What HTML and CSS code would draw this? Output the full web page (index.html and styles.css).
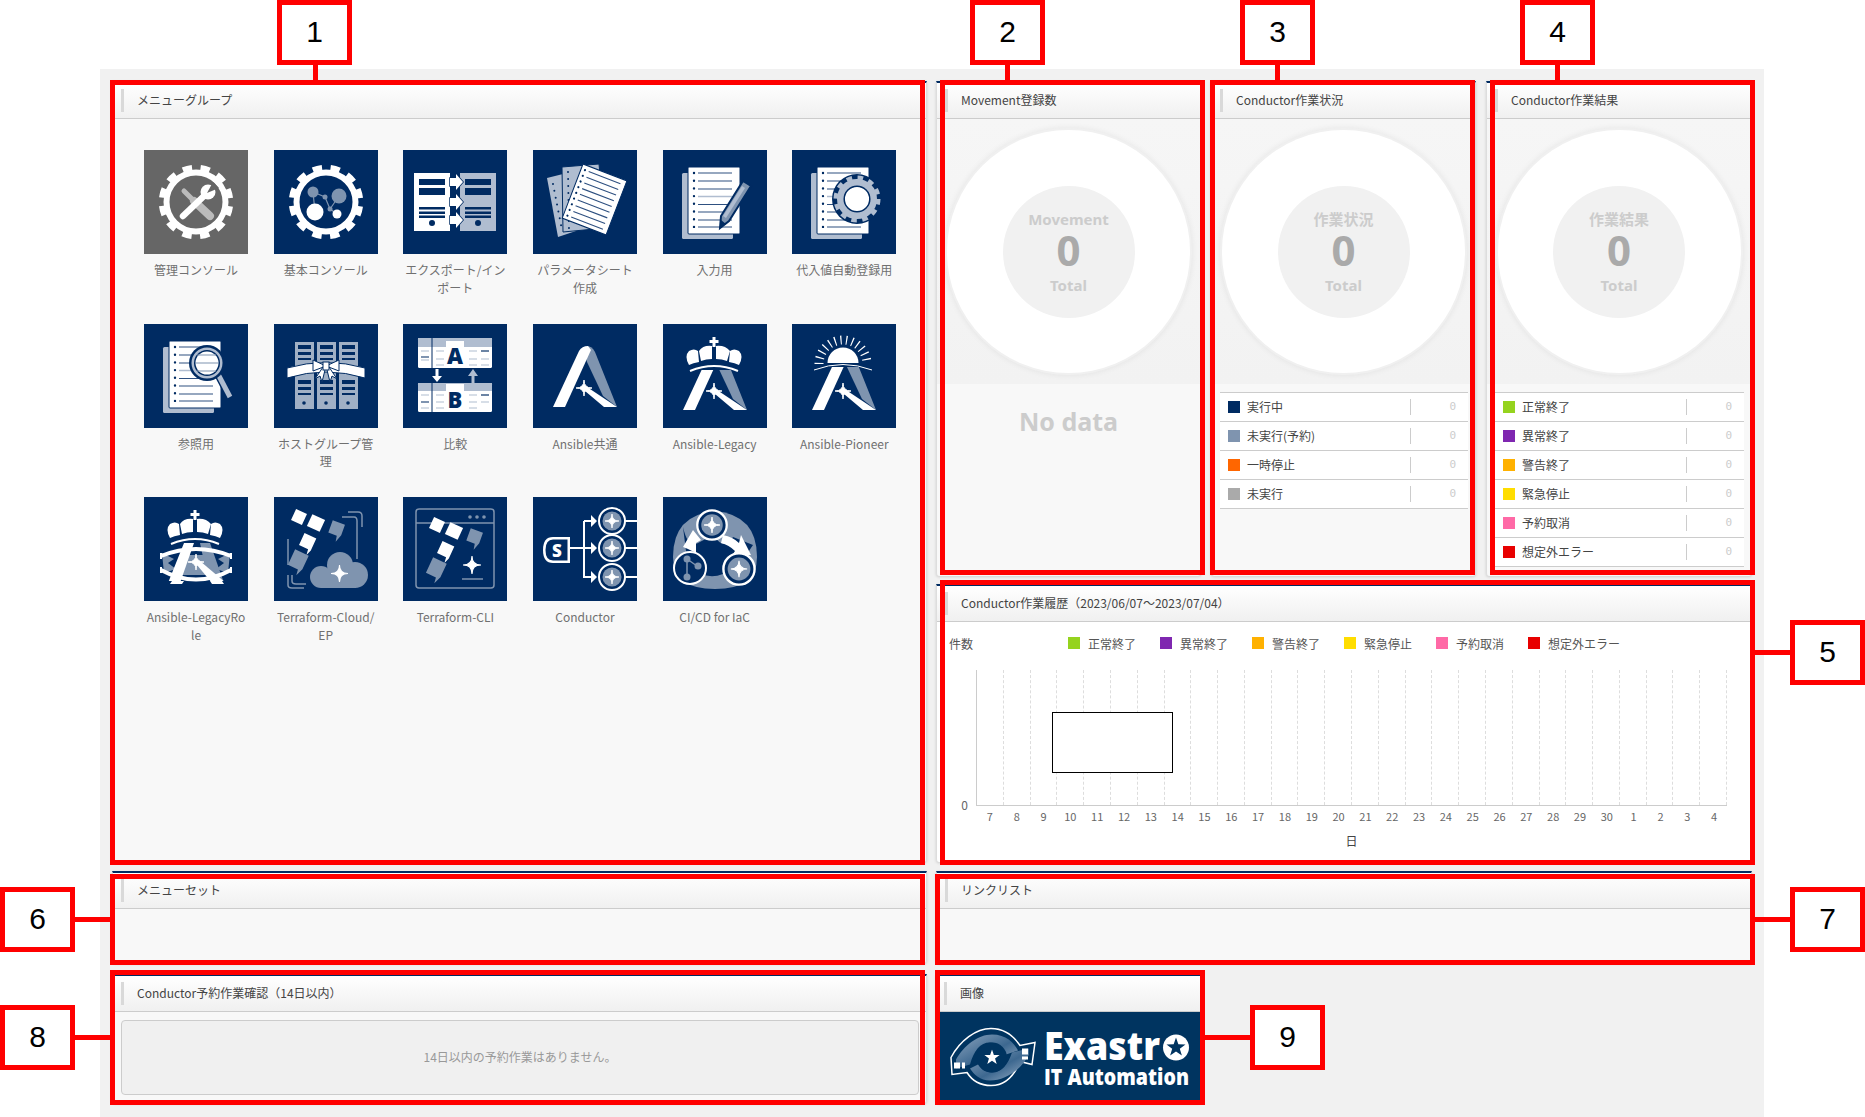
FILE: index.html
```html
<!DOCTYPE html>
<html lang="ja">
<head>
<meta charset="utf-8">
<title>Exastro IT Automation Dashboard</title>
<link rel="stylesheet" href="styles.css">
</head>
<body>
<svg class="sprite" aria-hidden="true">
  <defs>
    <symbol id="star4" viewBox="0 0 20 20"><path d="M10,0 Q10,10 20,10 Q10,10 10,20 Q10,10 0,10 Q10,10 10,0Z" fill="#fff" stroke="#fff" stroke-width="1.2"/></symbol>
    <symbol id="star5" viewBox="-10 -10 20 20"><polygon points="0,-10 2.35,-3.24 9.51,-3.09 3.8,1.24 5.88,8.09 0,4 -5.88,8.09 -3.8,1.24 -9.51,-3.09 -2.35,-3.24"/></symbol>
    <symbol id="gear" viewBox="0 0 104 104">
      <circle cx="52" cy="52" r="29.5" fill="none" stroke="#fff" stroke-width="6"/>
      <circle cx="52" cy="52" r="34" fill="none" stroke="#fff" stroke-width="6.5" stroke-dasharray="9.3 8.5" stroke-dashoffset="-4.3"/>
    </symbol>
    <symbol id="doc" viewBox="0 0 104 104">
      <rect x="19" y="23" width="51" height="66" rx="1.5" fill="#b0bdd0"/>
      <rect x="25" y="17" width="52" height="67" rx="1" fill="#fff" stroke="#002b62" stroke-width="1"/>
      <line x1="31" y1="23" x2="31" y2="77" stroke="#002b62" stroke-width="2.4" stroke-linecap="round" stroke-dasharray="0 7.7"/>
      <path d="M35,23H69M35,31H69M35,39H69M35,54.500H69M35,62H69M35,70H69M35,77H69" stroke="#2e5080" stroke-width="1.1"/>
      <path d="M35,46.500H69" stroke="#b0bdd0" stroke-width="1.5"/>
    </symbol>
    <symbol id="ansible" viewBox="0 0 104 104">
      <path d="M54,22 Q59,22 62,28 L84,83 L70,72 L54,38 L52,30Z" fill="#7f94af"/>
      <path d="M20,83 L46,27 Q49,22 55,22 L58,26 L32,83Z" fill="#fff"/>
      <path d="M54,63 L84,83 L71,83 L52,67Z" fill="#fff"/>
      <use href="#star4" x="43" y="56" width="16" height="16"/>
    </symbol>
    <symbol id="crown" viewBox="0 0 104 104">
      <path d="M49.500,13H52.500V16H55.500V19H52.500V23H49.500V19H46.500V16H49.500Z" fill="#fff"/>
      <path d="M26,41 Q21,32 26,27 Q31,24 35,27 L36,38 Q30,39 26,41Z" fill="#fff"/>
      <path d="M38,37 L36,27 Q40,21 49,22 L49,35 Q43,35 38,37Z" fill="#fff"/>
      <path d="M53,35 L53,22 Q62,21 67,27 L64,37 Q59,35 53,35Z" fill="#fff"/>
      <path d="M76,41 Q81,32 76,27 Q71,24 67,27 L66,38 Q72,39 76,41Z" fill="#fff"/>
      <path d="M27,47 Q51,37 75,47" fill="none" stroke="#fff" stroke-width="2"/>
    </symbol>
    <symbol id="tf" viewBox="0 0 104 104">
      <rect x="-6" y="-6" width="12" height="12" fill="#fff" transform="translate(25 20) rotate(25)"/>
      <rect x="-7" y="-6.500" width="14" height="13" fill="#fff" transform="translate(42 26) rotate(25)"/>
      <path d="M-6,-7 H7 V4 L4,12 L3,6 H-6Z" fill="#7f94af" transform="translate(62 32) rotate(20)"/>
      <path d="M-6,-7 H7 V6 L5,12 L4,6 H-6Z" fill="#fff" transform="translate(33 45) rotate(25)"/>
      <path d="M-8,-8 H7 V7 L4,15 L3,9 H-8Z" fill="#7f94af" transform="translate(25 63) rotate(25)"/>
    </symbol>
    <symbol id="rings" viewBox="0 0 30 30">
      <circle cx="15" cy="15" r="13" fill="#002b62" stroke="#fff" stroke-width="2"/>
      <circle cx="15" cy="15" r="9.500" fill="#7f94af"/>
      <use href="#star4" x="8" y="8" width="14" height="14"/>
    </symbol>
  </defs>
</svg>

<main class="dashboard">
  <div class="col-left">
    <section class="panel panel-top">
      <h2 class="panel-title">メニューグループ</h2>
      <div class="menu-grid">
        <a class="menu-item">
          <svg class="tile tile-gray" viewBox="0 0 104 104"><use href="#gear" width="104" height="104"/>
            <path d="M40,41 L50,51" stroke="#bbb" stroke-width="5" stroke-linecap="round"/><path d="M50,51 L66,66" stroke="#bbb" stroke-width="8" stroke-linecap="round"/>
            <path d="M39,66 L60,46" stroke="#fff" stroke-width="6.500" stroke-linecap="round"/><circle cx="64" cy="42" r="7.500" fill="#fff"/><path d="M63,43 L69,32 L75,38Z" fill="#666"/>
          </svg>
          <span class="menu-label">管理コンソール</span>
        </a>
        <a class="menu-item">
          <svg class="tile" viewBox="0 0 104 104"><use href="#gear" width="104" height="104"/>
            <path d="M39,42 L41,62 M39,42 L51,47 L56,59 L65,46 M56,59 L63,64" stroke="#7f94af" stroke-width="1.2" fill="none"/>
            <circle cx="39" cy="42" r="5.500" fill="#7f94af"/><circle cx="65" cy="46" r="7.500" fill="#7f94af"/><circle cx="51" cy="47" r="2.500" fill="#7f94af"/><circle cx="56" cy="59" r="2.500" fill="#7f94af"/>
            <circle cx="41" cy="62" r="8.500" fill="#fff"/><circle cx="63" cy="64" r="4.500" fill="#fff"/>
          </svg>
          <span class="menu-label">基本コンソール</span>
        </a>
        <a class="menu-item">
          <svg class="tile" viewBox="0 0 104 104">
            <rect x="57" y="23" width="36" height="58" fill="#b0bdd0"/><rect x="11" y="23" width="36" height="58" fill="#fff"/>
            <path d="M16,29H42V35H16ZM16,38H42V45H16ZM16,57H42V59.500H16ZM16,61.500H42V64H16ZM16,65.500H42V68H16ZM62,29H88V35H62ZM62,38H88V45H62ZM62,57H88V59.500H62ZM62,61.500H88V64H62ZM62,65.500H88V68H62Z" fill="#002b62"/>
            <circle cx="29" cy="73" r="3" fill="#002b62"/><circle cx="75" cy="73" r="3" fill="#002b62"/>
            <path d="M47,28H53V24L60,32L53,40V36H47ZM47,48H53V44L60,52L53,60V56H47ZM47,66H53V62L60,70L53,78V74H47Z" fill="#fff" stroke="#002b62" stroke-width="1.500" paint-order="stroke"/>
          </svg>
          <span class="menu-label">エクスポート/イン<br>ポート</span>
        </a>
        <a class="menu-item">
          <svg class="tile" viewBox="0 0 104 104">
            <polygon points="14,28 38,22 52,78 25,87" fill="#b0bdd0"/><polygon points="29,17 66,14 72,78 30,82" fill="#b0bdd0" stroke="#002b62" stroke-width="1"/>
            <line x1="20" y1="34" x2="29" y2="80" stroke="#002b62" stroke-width="2" stroke-dasharray="0 7" stroke-linecap="round"/><line x1="35" y1="22" x2="36" y2="80" stroke="#002b62" stroke-width="2" stroke-dasharray="0 7" stroke-linecap="round"/>
            <g transform="translate(50 14) rotate(21)">
              <rect width="47" height="58" fill="#fff" stroke="#002b62" stroke-width="1"/>
              <line x1="4" y1="5" x2="4" y2="54" stroke="#002b62" stroke-width="2.200" stroke-linecap="round" stroke-dasharray="0 6.100"/>
              <path d="M8,5H42M8,11.100H42M8,17.200H42M8,23.300H42M8,29.400H42M8,35.500H42M8,41.600H42M8,47.700H42M8,53.800H42" stroke="#2e5080" stroke-width="1.100"/>
            </g>
          </svg>
          <span class="menu-label">パラメータシート<br>作成</span>
        </a>
        <a class="menu-item">
          <svg class="tile" viewBox="0 0 104 104"><use href="#doc" width="104" height="104"/>
            <path d="M57,78 L58,66 L80,31 L88,36 L66,71Z" fill="#7f94af" stroke="#002b62" stroke-width="2"/>
            <path d="M60,66 L79,36 L82,38 L63,68Z" fill="#b0bdd0"/><path d="M57,78 L58,70 L63,74Z" fill="#002b62"/>
          </svg>
          <span class="menu-label">入力用</span>
        </a>
        <a class="menu-item">
          <svg class="tile" viewBox="0 0 104 104"><use href="#doc" width="104" height="104"/>
            <circle cx="65" cy="49" r="25" fill="#002b62"/>
            <circle cx="65" cy="49" r="21" fill="none" stroke="#b0bdd0" stroke-width="5" stroke-dasharray="5.500 5.490"/>
            <circle cx="65" cy="49" r="16.500" fill="none" stroke="#b0bdd0" stroke-width="7"/>
            <circle cx="65" cy="49" r="12.800" fill="#fff" stroke="#002b62" stroke-width="1.500"/>
          </svg>
          <span class="menu-label">代入値自動登録用</span>
        </a>

        <a class="menu-item">
          <svg class="tile" viewBox="0 0 104 104"><use href="#doc" width="104" height="104"/>
            <path d="M75,52 L86,73" stroke="#002b62" stroke-width="8"/><path d="M75,52 L86,73" stroke="#b0bdd0" stroke-width="5"/>
            <circle cx="63" cy="39" r="18" fill="#002b62"/><circle cx="63" cy="39" r="15.500" fill="#b0bdd0"/><circle cx="63" cy="39" r="13" fill="#002b62"/><circle cx="63" cy="39" r="11.500" fill="#fff"/>
            <path d="M53,31H72M52,39H74M53,47H72" stroke="#7f94af" stroke-width="1.200"/>
          </svg>
          <span class="menu-label">参照用</span>
        </a>
        <a class="menu-item">
          <svg class="tile" viewBox="0 0 104 104">
            <path d="M21,18H40V85H21ZM43,18H62V85H43ZM65,18H84V85H65Z" fill="#a0b0c5"/>
            <path d="M24,21H37V25H24ZM24,28H37V31H24ZM24,34H37V36H24ZM46,21H59V25H46ZM46,28H59V31H46ZM46,34H59V36H46ZM68,21H81V25H68ZM68,28H81V31H68ZM68,34H81V36H68ZM24,56H37V60H24ZM24,63H37V66H24ZM24,69H37V71H24ZM46,56H59V60H46ZM46,63H59V66H46ZM46,69H59V71H46ZM68,56H81V60H68ZM68,63H81V66H68ZM68,69H81V71H68Z" fill="#002b62"/>
            <circle cx="30" cy="79" r="1.800" fill="#002b62"/><circle cx="52" cy="79" r="1.800" fill="#002b62"/><circle cx="74" cy="79" r="1.800" fill="#002b62"/>
            <path d="M13,44 Q52,33 91,44 L91,54 Q52,42 13,54Z" fill="#fff" stroke="#002b62" stroke-width="1"/>
            <path d="M52,42 L39,36 L39,47Z M52,42 L65,36 L65,47Z M49,43 L41,55 L46,52 L48,58 L51,46Z M55,43 L63,55 L58,52 L56,58 L53,46Z" fill="#fff" stroke="#002b62" stroke-width="1"/>
            <rect x="49" y="38" width="6" height="8" fill="#fff" stroke="#002b62" stroke-width="1"/>
          </svg>
          <span class="menu-label">ホストグループ管<br>理</span>
        </a>
        <a class="menu-item">
          <svg class="tile" viewBox="0 0 104 104">
            <rect x="15" y="14" width="74" height="30" rx="1.500" fill="#fff"/><path d="M15,14H89V23H15Z" fill="#b0bdd0"/>
            <rect x="15" y="59" width="74" height="29" rx="1.500" fill="#fff"/><path d="M15,59H89V67H15Z" fill="#b0bdd0"/>
            <path d="M29,14V44M29,59V88" stroke="#002b62" stroke-width="1"/>
            <path d="M18,27H26M18,36H26M66,27H74M78,27H86M66,35H74M78,35H86M66,41H74M78,41H86M33,27H41M33,35H41M33,41H41M18,71H26M33,71H41M33,78H41M33,84H41M66,71H74M78,71H86M66,78H74M78,78H86M66,84H74M18,84H26" stroke="#b0bdd0" stroke-width="1.200"/>
            <path d="M18,33H26M18,78H26M78,71H86M78,27H86" stroke="#002b62" stroke-width="1.200"/>
            <rect x="43" y="17" width="18" height="8" fill="#fff"/><rect x="43" y="60" width="18" height="8" fill="#fff"/>
            <text class="tile-letter" x="52" y="40" text-anchor="middle">A</text><text class="tile-letter" x="52" y="84" text-anchor="middle">B</text>
            <path d="M32.500,45H35.500V52H39L34,58L29,52H32.500Z" fill="#fff"/><path d="M68.500,59V52H65L70,45L75,52H71.500V59Z" fill="#b0bdd0"/>
          </svg>
          <span class="menu-label">比較</span>
        </a>
        <a class="menu-item">
          <svg class="tile" viewBox="0 0 104 104"><use href="#ansible" width="104" height="104"/></svg>
          <span class="menu-label">Ansible共通</span>
        </a>
        <a class="menu-item">
          <svg class="tile" viewBox="0 0 104 104"><use href="#ansible" y="3" width="104" height="104"/><rect width="104" height="46" fill="#002b62"/><use href="#crown" width="104" height="104"/></svg>
          <span class="menu-label">Ansible-Legacy</span>
        </a>
        <a class="menu-item">
          <svg class="tile" viewBox="0 0 104 104"><use href="#ansible" y="3" width="104" height="104"/><rect width="104" height="43" fill="#002b62"/>
            <path d="M35.500,39 A15.500,15.500 0 0 1 66.500,39Z" fill="#fff"/>
            <path d="M27,40 A24,24 0 0 1 75,40" fill="none" stroke="#fff" stroke-width="9" stroke-dasharray="1.200 4.600"/>
            <path d="M22,46 Q51,35 80,46" fill="none" stroke="#fff" stroke-width="1"/>
          </svg>
          <span class="menu-label">Ansible-Pioneer</span>
        </a>

        <a class="menu-item">
          <svg class="tile" viewBox="0 0 104 104">
            <path d="M18,56 L30,62 L24,66 L32,72 L20,76Z M86,56 L74,62 L80,66 L72,72 L84,76Z M36,58 H68 L72,78 H34Z" fill="#7f94af"/>
            <path d="M24,86 L40,46 H50 L36,86Z" fill="#fff"/><path d="M56,46 H66 L80,86 L62,74Z" fill="#7f94af"/>
            <path d="M56,64 L82,86 H68 L53,68Z" fill="#fff"/><use href="#star4" x="44" y="57" width="16" height="16"/>
            <rect y="84" width="104" height="20" fill="#002b62"/>
            <path d="M28,84H40L38,87H26ZM66,84H78L80,87H68Z" fill="#fff"/>
            <use href="#crown" y="0" width="104" height="104"/>
            <path d="M17,59 Q52,45 87,59" fill="none" stroke="#fff" stroke-width="4"/>
            <path d="M17,73 Q52,92 87,73" fill="none" stroke="#fff" stroke-width="4"/>
            <path d="M17,56V62M87,56V62M17,70V76M87,70V76" stroke="#fff" stroke-width="2"/>
          </svg>
          <span class="menu-label">Ansible-LegacyRo<br>le</span>
        </a>
        <a class="menu-item">
          <svg class="tile" viewBox="0 0 104 104"><use href="#tf" width="104" height="104"/>
            <path d="M74,15H84Q88,15 88,19V30M68,20H80Q83,20 83,24V62M14,42V68M14,78V88Q14,91 18,91H30M18,78V84Q18,87 22,87H32" fill="none" stroke="#7f94af" stroke-width="1.500"/>
            <circle cx="66" cy="68" r="13" fill="#7f94af"/><circle cx="47" cy="80" r="11" fill="#7f94af"/><circle cx="81" cy="78" r="13" fill="#7f94af"/><rect x="47" y="76" width="35" height="15" fill="#7f94af"/>
            <use href="#star4" x="57" y="68" width="17" height="17"/>
          </svg>
          <span class="menu-label">Terraform-Cloud/<br>EP</span>
        </a>
        <a class="menu-item">
          <svg class="tile" viewBox="0 0 104 104">
            <rect x="13" y="12" width="78" height="79" rx="3" fill="none" stroke="#7f94af" stroke-width="1.500"/>
            <path d="M13,26H91" stroke="#7f94af" stroke-width="1.500"/>
            <circle cx="67" cy="20" r="1.800" fill="#7f94af"/><circle cx="74" cy="20" r="1.800" fill="#7f94af"/><circle cx="81" cy="20" r="1.800" fill="#7f94af"/>
            <use href="#tf" x="9" y="8" width="104" height="104"/>
            <use href="#star4" x="60" y="59" width="18" height="18"/>
            <path d="M59,82H80" stroke="#7f94af" stroke-width="1.500"/>
          </svg>
          <span class="menu-label">Terraform-CLI</span>
        </a>
        <a class="menu-item">
          <svg class="tile" viewBox="0 0 104 104">
            <path d="M37,40H20Q10,40 10,53Q10,66 20,66H37Z" fill="#fff"/><path d="M34.500,42.500H20Q12.500,42.500 12.500,53Q12.500,63.500 20,63.500H34.500Z" fill="#002b62"/>
            <text class="tile-letter tile-s" x="24" y="59.500" text-anchor="middle">S</text>
            <path d="M37,51H59M51,24H59M51,80H59M51,24V81" stroke="#fff" stroke-width="2" fill="none"/>
            <path d="M58,18L64,24L58,30ZM58,45L64,51L58,57ZM58,74L64,80L58,86Z" fill="#fff"/>
            <path d="M91,24H104M91,51H104M91,80H104" stroke="#fff" stroke-width="2"/>
            <use href="#rings" x="64" y="9" width="30" height="30"/><use href="#rings" x="64" y="36" width="30" height="30"/><use href="#rings" x="64" y="65" width="30" height="30"/>
          </svg>
          <span class="menu-label">Conductor</span>
        </a>
        <a class="menu-item">
          <svg class="tile" viewBox="0 0 104 104">
            <path d="M10,60 Q10,18 52,14 Q94,18 94,60 Q94,92 52,92 Q10,92 10,60Z" fill="#7f94af"/>
            <path d="M20,30 Q25,52 35,46 L50,38 Q62,55 70,40 L90,48 Q60,96 25,70Z" fill="#002b62"/>
            <path d="M20,50 L30,33 L38,43 L33,46 L33,56 L25,52Z" fill="#fff"/>
            <path d="M60,38 Q70,40 76,46 L78,38 L88,58 L68,60 L72,54 Q66,48 58,46Z" fill="#fff"/>
            <use href="#rings" x="32" y="11" width="34" height="34"/>
            <circle cx="27" cy="71" r="16" fill="#002b62" stroke="#fff" stroke-width="2"/>
            <path d="M24,62 L24,80 M24,62 L34,69" stroke="#7f94af" stroke-width="1.500"/><circle cx="24" cy="62" r="3.500" fill="#7f94af"/><circle cx="24" cy="80" r="3.500" fill="#7f94af"/><circle cx="35" cy="69" r="3.500" fill="#7f94af"/>
            <use href="#rings" x="58" y="54" width="36" height="36"/>
          </svg>
          <span class="menu-label">CI/CD for IaC</span>
        </a>
      </div>
    </section>

    <section class="panel panel-slim">
      <h2 class="panel-title">メニューセット</h2>
    </section>

    <section class="panel panel-bottom">
      <h2 class="panel-title">Conductor予約作業確認（14日以内）</h2>
      <div class="reserve-body"><p class="reserve-msg">14日以内の予約作業はありません。</p></div>
    </section>
  </div>

  <div class="col-right">
    <div class="stats-row">
      <section class="panel panel-stat">
        <h2 class="panel-title">Movement登録数</h2>
        <div class="donut-area"><div class="donut"><div class="donut-core"><span class="donut-name">Movement</span><span class="donut-num">0</span><span class="donut-total">Total</span></div></div></div>
        <p class="no-data">No data</p>
      </section>
      <section class="panel panel-stat">
        <h2 class="panel-title">Conductor作業状況</h2>
        <div class="donut-area"><div class="donut"><div class="donut-core"><span class="donut-name">作業状況</span><span class="donut-num">0</span><span class="donut-total">Total</span></div></div></div>
        <ul class="stat-list">
          <li class="stat-row"><i class="swatch c-navy"></i><span class="stat-name">実行中</span><span class="stat-val">0</span></li>
          <li class="stat-row"><i class="swatch c-steel"></i><span class="stat-name">未実行(予約)</span><span class="stat-val">0</span></li>
          <li class="stat-row"><i class="swatch c-orange"></i><span class="stat-name">一時停止</span><span class="stat-val">0</span></li>
          <li class="stat-row"><i class="swatch c-gray"></i><span class="stat-name">未実行</span><span class="stat-val">0</span></li>
        </ul>
      </section>
      <section class="panel panel-stat">
        <h2 class="panel-title">Conductor作業結果</h2>
        <div class="donut-area"><div class="donut"><div class="donut-core"><span class="donut-name">作業結果</span><span class="donut-num">0</span><span class="donut-total">Total</span></div></div></div>
        <ul class="stat-list">
          <li class="stat-row"><i class="swatch c-green"></i><span class="stat-name">正常終了</span><span class="stat-val">0</span></li>
          <li class="stat-row"><i class="swatch c-purple"></i><span class="stat-name">異常終了</span><span class="stat-val">0</span></li>
          <li class="stat-row"><i class="swatch c-amber"></i><span class="stat-name">警告終了</span><span class="stat-val">0</span></li>
          <li class="stat-row"><i class="swatch c-yellow"></i><span class="stat-name">緊急停止</span><span class="stat-val">0</span></li>
          <li class="stat-row"><i class="swatch c-pink"></i><span class="stat-name">予約取消</span><span class="stat-val">0</span></li>
          <li class="stat-row"><i class="swatch c-red"></i><span class="stat-name">想定外エラー</span><span class="stat-val">0</span></li>
        </ul>
      </section>
    </div>

    <section class="panel panel-chart">
      <h2 class="panel-title">Conductor作業履歴（2023/06/07～2023/07/04）</h2>
      <div class="chart">
        <div class="legend">
          <span class="legend-title">件数</span>
          <span class="legend-item"><i class="swatch c-green"></i>正常終了</span>
          <span class="legend-item"><i class="swatch c-purple"></i>異常終了</span>
          <span class="legend-item"><i class="swatch c-amber"></i>警告終了</span>
          <span class="legend-item"><i class="swatch c-yellow"></i>緊急停止</span>
          <span class="legend-item"><i class="swatch c-pink"></i>予約取消</span>
          <span class="legend-item"><i class="swatch c-red"></i>想定外エラー</span>
        </div>
        <div class="plot-row">
          <span class="y-tick">0</span>
          <div class="plot">
            <i></i><i></i><i></i><i></i><i></i><i></i><i></i><i></i><i></i><i></i><i></i><i></i><i></i><i></i>
            <i></i><i></i><i></i><i></i><i></i><i></i><i></i><i></i><i></i><i></i><i></i><i></i><i></i><i></i>
            <div class="plot-blank"></div>
          </div>
        </div>
        <div class="x-ticks">
          <span>7</span><span>8</span><span>9</span><span>10</span><span>11</span><span>12</span><span>13</span><span>14</span><span>15</span><span>16</span><span>17</span><span>18</span><span>19</span><span>20</span>
          <span>21</span><span>22</span><span>23</span><span>24</span><span>25</span><span>26</span><span>27</span><span>28</span><span>29</span><span>30</span><span>1</span><span>2</span><span>3</span><span>4</span>
        </div>
        <div class="x-title">日</div>
      </div>
    </section>

    <section class="panel panel-slim">
      <h2 class="panel-title">リンクリスト</h2>
    </section>

    <section class="panel panel-bottom panel-image">
      <h2 class="panel-title">画像</h2>
      <svg class="logo" viewBox="0 0 265 91">
        <defs>
          <linearGradient id="eye-grad" x1="0" y1="0" x2="1" y2="1"><stop offset="0" stop-color="#8ea6bf"/><stop offset="0.55" stop-color="#3d6890"/><stop offset="1" stop-color="#9db1c7"/></linearGradient>
        </defs>
        <path d="M15,45 C24,28 40,16 55,16 C68,16 78,24 84,33 L99,30 L96,52 L84,49 C78,64 68,73 55,73 C44,73 36,68 31,60 L16,62Z" fill="#003460" stroke="#fff" stroke-width="1.500"/>
        <path d="M20,47 C28,33 42,22 56,22 C70,22 78,30 82,38 L70,42 C66,33 60,30 54,30 C44,30 38,38 34,52 L20,56Z" fill="url(#eye-grad)"/>
        <path d="M93,42 C86,56 70,68 54,68 C44,68 38,62 34,56 L42,52 C46,58 50,60 56,60 C66,60 72,52 76,40 L93,36Z" fill="url(#eye-grad)"/>
        <circle cx="56" cy="45" r="15" fill="#003460"/>
        <use href="#star5" class="logo-star" x="48" y="37" width="16" height="16"/>
        <path d="M18,50H24V56H18ZM26,50H29V56H26ZM86,36H92V42H86ZM86,44H92V47H86Z" fill="#fff"/>
        <text class="logo-main" x="108" y="47" textLength="116" lengthAdjust="spacingAndGlyphs">Exastr</text>
        <circle cx="240" cy="35" r="13" fill="#fff"/>
        <use href="#star5" class="logo-star-dark" x="230" y="25" width="20" height="20"/>
        <text class="logo-sub" x="108" y="72" textLength="145" lengthAdjust="spacingAndGlyphs">IT Automation</text>
      </svg>
    </section>
  </div>
</main>

<div class="mark box-1"></div><div class="mark box-2"></div><div class="mark box-3"></div><div class="mark box-4"></div><div class="mark box-5"></div><div class="mark box-6"></div><div class="mark box-7"></div><div class="mark box-8"></div><div class="mark box-9"></div>
<div class="wire wire-1"></div><div class="wire wire-2"></div><div class="wire wire-3"></div><div class="wire wire-4"></div><div class="wire wire-5"></div><div class="wire wire-6"></div><div class="wire wire-7"></div><div class="wire wire-8"></div><div class="wire wire-9"></div>
<div class="tag tag-1">1</div><div class="tag tag-2">2</div><div class="tag tag-3">3</div><div class="tag tag-4">4</div><div class="tag tag-5">5</div><div class="tag tag-6">6</div><div class="tag tag-7">7</div><div class="tag tag-8">8</div><div class="tag tag-9">9</div>
</body>
</html>
```

FILE: styles.css
```css
* { box-sizing: border-box; }
html, body { margin: 0; padding: 0; background: #fff; }
body {
  position: relative;
  width: 1865px;
  height: 1117px;
  overflow: hidden;
  padding: 69px 101px 0 100px;
  font-family: "Noto Sans CJK JP", "Noto Sans", sans-serif;
  font-size: 12px;
  color: #333;
}
.sprite { position: absolute; width: 0; height: 0; }

.dashboard {
  height: 1048px;
  background: #f1f1f1;
  padding: 12px 12px 0;
  display: grid;
  grid-template-columns: 815px 816px;
  column-gap: 9px;
}
.col-left, .col-right { display: flex; flex-direction: column; }

.panel {
  background: #f8f8f8;
  border-top: 2px solid #002b62;
  border-left: 1px solid #ddd;
  border-right: 1px solid #ddd;
  border-radius: 0 0 3px 3px;
  box-shadow: 0 1px 3px rgba(0, 0, 0, .15);
  overflow: hidden;
}
.panel-title {
  position: relative;
  margin: 0;
  height: 36px;
  padding-left: 24px;
  font-size: 12px;
  font-weight: 400;
  line-height: 33px;
  color: #444;
  background: linear-gradient(#fff, #f0f0f0);
  border-bottom: 1px solid #ccc;
}
.panel-title::before {
  content: "";
  position: absolute;
  left: 8px;
  top: 6px;
  width: 3px;
  height: 23px;
  background: #d9d9d9;
}
.panel-top { height: 781px; }
.panel-slim { height: 92px; margin-top: 9px; flex: none; }
.panel-bottom { height: 129px; margin-top: 11px; flex: none; }

/* menu */
.menu-grid {
  display: grid;
  grid-template-columns: repeat(6, 129.67px);
  grid-auto-rows: 173.7px;
  padding: 31px 0 0 31px;
}
.menu-item { display: flex; flex-direction: column; align-items: center; width: 104px; }
.tile { width: 104px; height: 104px; flex: none; background: #002b62; display: block; }
.tile-gray { background: #666; }
.tile-letter { font-family: "Open Sans", sans-serif; font-size: 22px; font-weight: 800; fill: #002b62; }
.tile-s { font-size: 17px; fill: #fff; }
.menu-label {
  margin-top: 7px;
  width: 112px;
  font-size: 12px;
  line-height: 17.500px;
  text-align: center;
  color: #707070;
  white-space: nowrap;
}

/* reservation */
.reserve-body { padding: 8px 7px 0 8px; }
.reserve-msg {
  margin: 0;
  height: 75px;
  line-height: 71px;
  background: #f0f0f0;
  border: 1px solid #ccc;
  border-radius: 4px;
  text-align: center;
  color: #999;
  font-size: 12px;
}

/* stats */
.stats-row {
  display: grid;
  grid-template-columns: 265px 265px 266px;
  column-gap: 10px;
  height: 495px;
  flex: none;
}
.panel-stat { display: flex; flex-direction: column; }
.donut-area {
  height: 265px;
  flex: none;
  display: flex;
  align-items: center;
  justify-content: center;
  background: linear-gradient(#f6f6f6, #f2f2f2);
}
.donut {
  width: 243px;
  height: 243px;
  flex: none;
  border-radius: 50%;
  background: #fff;
  box-shadow: 0 0 0 2px #f0f0f0, 0 0 6px 2px rgba(0, 0, 0, .07);
  display: flex;
  align-items: center;
  justify-content: center;
}
.donut-core {
  width: 132px;
  height: 132px;
  border-radius: 50%;
  background: #f1f1f1;
  display: flex;
  flex-direction: column;
  align-items: center;
  font-family: "Noto Sans", "Noto Sans CJK JP", sans-serif;
  font-weight: 700;
}
.donut-name { margin-top: 23px; font-size: 15px; line-height: 20px; color: #ccc; white-space: nowrap; }
.donut-num { font-size: 42px; line-height: 42px; color: #aaa; }
.donut-total { margin-top: 4px; font-size: 15px; line-height: 20px; color: #ccc; }
.no-data {
  margin: 21px 0 0;
  text-align: center;
  font-family: "Noto Sans", sans-serif;
  font-size: 25px;
  font-weight: 700;
  line-height: 32px;
  color: #ccc;
}
.stat-list {
  list-style: none;
  margin: 8px 7px 0 8px;
  padding: 0;
  border-top: 1px solid #ccc;
}
.stat-row {
  height: 29px;
  display: flex;
  align-items: center;
  background: #fff;
  border-bottom: 1px solid #ccc;
  padding-left: 8px;
  font-size: 12px;
  color: #444;
}
.swatch { display: block; width: 12px; height: 12px; flex: none; }
.stat-name { margin-left: 7px; flex: 1; white-space: nowrap; padding-bottom: 2px; }
.stat-val {
  width: 58px;
  height: 16px;
  line-height: 16px;
  border-left: 1px solid #ccc;
  padding-right: 12px;
  text-align: right;
  font-family: "DejaVu Sans Mono", monospace;
  font-size: 11px;
  color: #ccc;
}
.c-navy { background: #002b62; }
.c-steel { background: #7f94af; }
.c-orange { background: #ff6600; }
.c-gray { background: #aaa; }
.c-green { background: #95d31e; }
.c-purple { background: #7f27b0; }
.c-amber { background: #ffb100; }
.c-yellow { background: #ffdd00; }
.c-pink { background: #ff69a6; }
.c-red { background: #e80000; }

/* chart */
.panel-chart { height: 278px; margin-top: 8px; flex: none; background: #fff; }
.chart { padding: 12px 0 0 12px; }
.legend { display: flex; align-items: center; height: 18px; font-size: 12px; color: #555; }
.legend-title { width: 119px; }
.legend-item { display: flex; align-items: center; width: 92px; white-space: nowrap; }
.legend-item .swatch { margin-right: 8px; }
.plot-row { display: flex; margin-top: 18px; }
.y-tick {
  width: 27px;
  padding-right: 8px;
  align-self: flex-end;
  margin-bottom: -6px;
  text-align: right;
  font-size: 12px;
  line-height: 14px;
  color: #666;
}
.plot {
  position: relative;
  width: 751px;
  height: 136px;
  display: grid;
  grid-template-columns: repeat(28, 1fr);
  border-left: 1px solid #ccc;
  border-bottom: 1px solid #ccc;
}
.plot i { border-right: 1px dashed #ddd; }
.plot-blank {
  position: absolute;
  left: 75px;
  top: 42px;
  width: 121px;
  height: 61px;
  background: #fff;
  border: 1.500px solid #000;
}
.x-ticks {
  margin-left: 27.500px;
  width: 751px;
  height: 20px;
  display: grid;
  grid-template-columns: repeat(28, 1fr);
  font-size: 11px;
  line-height: 20px;
  text-align: center;
  color: #666;
}
.x-title { margin: 5px 0 0 27px; width: 751px; text-align: center; font-size: 12px; line-height: 20px; color: #444; }

/* image panel */
.panel-image { width: 265px; border-left: 0; border-right: 0; }
.logo { display: block; width: 265px; height: 92px; background: #003460; }
.logo-main { font-family: "Open Sans", sans-serif; font-size: 39px; font-weight: 800; fill: #fff; }
.logo-sub { font-family: "Open Sans", sans-serif; font-size: 23px; font-weight: 800; fill: #fff; }
.logo-star { fill: #fff; }
.logo-star-dark { fill: #003460; }

/* annotation overlay */
.mark { position: absolute; border: 5px solid #f00; }
.box-1 { left: 110px; top: 80px; width: 815px; height: 785px; }
.box-2 { left: 940px; top: 80px; width: 265px; height: 495px; }
.box-3 { left: 1210px; top: 80px; width: 265px; height: 495px; }
.box-4 { left: 1490px; top: 80px; width: 265px; height: 495px; }
.box-5 { left: 940px; top: 580px; width: 815px; height: 285px; }
.box-6 { left: 110px; top: 874px; width: 815px; height: 91px; }
.box-7 { left: 935px; top: 874px; width: 820px; height: 91px; }
.box-8 { left: 110px; top: 970px; width: 815px; height: 135px; }
.box-9 { left: 935px; top: 970px; width: 270px; height: 135px; }

.wire { position: absolute; background: #f00; }
.wire-1 { left: 313px; top: 65px; width: 5px; height: 15px; }
.wire-2 { left: 1005px; top: 65px; width: 5px; height: 15px; }
.wire-3 { left: 1275px; top: 65px; width: 5px; height: 15px; }
.wire-4 { left: 1555px; top: 65px; width: 5px; height: 15px; }
.wire-5 { left: 1755px; top: 650px; width: 35px; height: 5px; }
.wire-6 { left: 75px; top: 917px; width: 35px; height: 5px; }
.wire-7 { left: 1755px; top: 917px; width: 35px; height: 5px; }
.wire-8 { left: 75px; top: 1035px; width: 35px; height: 5px; }
.wire-9 { left: 1205px; top: 1035px; width: 45px; height: 5px; }

.tag {
  position: absolute;
  width: 75px;
  height: 65px;
  background: #fff;
  border: 5px solid #f00;
  font-family: "Liberation Sans", sans-serif;
  font-size: 30px;
  line-height: 53px;
  text-align: center;
  color: #000;
}
.tag-1 { left: 277px; top: 0; }
.tag-2 { left: 970px; top: 0; }
.tag-3 { left: 1240px; top: 0; }
.tag-4 { left: 1520px; top: 0; }
.tag-5 { left: 1790px; top: 620px; }
.tag-6 { left: 0; top: 887px; }
.tag-7 { left: 1790px; top: 887px; }
.tag-8 { left: 0; top: 1005px; }
.tag-9 { left: 1250px; top: 1005px; }
```
